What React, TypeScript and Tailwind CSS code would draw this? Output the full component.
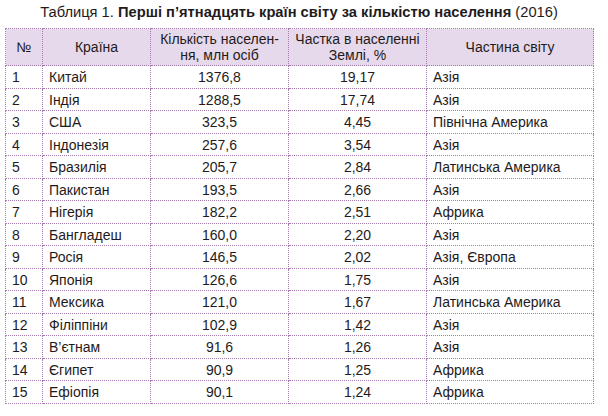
const rows: [string, string, string, string, string][] = [
  ["1", "Китай", "1376,8", "19,17", "Азія"],
  ["2", "Індія", "1288,5", "17,74", "Азія"],
  ["3", "США", "323,5", "4,45", "Північна Америка"],
  ["4", "Індонезія", "257,6", "3,54", "Азія"],
  ["5", "Бразилія", "205,7", "2,84", "Латинська Америка"],
  ["6", "Пакистан", "193,5", "2,66", "Азія"],
  ["7", "Нігерія", "182,2", "2,51", "Африка"],
  ["8", "Бангладеш", "160,0", "2,20", "Азія"],
  ["9", "Росія", "146,5", "2,02", "Азія, Європа"],
  ["10", "Японія", "126,6", "1,75", "Азія"],
  ["11", "Мексика", "121,0", "1,67", "Латинська Америка"],
  ["12", "Філіппіни", "102,9", "1,42", "Азія"],
  ["13", "В’єтнам", "91,6", "1,26", "Азія"],
  ["14", "Єгипет", "90,9", "1,25", "Африка"],
  ["15", "Ефіопія", "90,1", "1,24", "Африка"],
];

const cell = "border border-dotted border-[#a57cad] px-[6px] py-0";

export default function App() {
  return (
    <div className="w-[608px] h-[416px] bg-white text-[#1f1b1c] font-['Liberation_Sans',Arial,sans-serif]">
      <div className="w-[588px] ml-[5px] pt-[3px]">
        <p className="text-center text-[14.7px] leading-[18px] h-[25px]">
          Таблиця 1. <span className="font-bold">Перші п’ятнадцять країн світу за кількістю населення</span> (2016)
        </p>
        <table className="table-fixed border-collapse w-[588px] text-[14px]">
          <colgroup>
            <col className="w-[37px]" />
            <col className="w-[108px]" />
            <col className="w-[138px]" />
            <col className="w-[138px]" />
            <col className="w-[167px]" />
          </colgroup>
          <thead>
            <tr className="bg-[#e6d9eb] h-[37px] leading-[16px]">
              <th className={`${cell} font-normal text-center`}>№</th>
              <th className={`${cell} font-normal text-center`}>Країна</th>
              <th className={`${cell} font-normal text-center`}>
                Кількість населен-
                <br />
                ня, млн осіб
              </th>
              <th className={`${cell} font-normal text-center`}>
                Частка в населенні
                <br />
                Землі, %
              </th>
              <th className={`${cell} font-normal text-center`}>Частина світу</th>
            </tr>
          </thead>
          <tbody>
            {rows.map((r, i) => (
              <tr key={r[0]} className={`${i % 2 === 0 ? "h-[23px]" : "h-[22px]"} leading-[16px]`}>
                <td className={`${cell} text-left`}>{r[0]}</td>
                <td className={`${cell} text-left`}>{r[1]}</td>
                <td className={`${cell} text-center`}>{r[2]}</td>
                <td className={`${cell} text-center`}>{r[3]}</td>
                <td className={`${cell} text-left`}>{r[4]}</td>
              </tr>
            ))}
          </tbody>
        </table>
      </div>
    </div>
  );
}
